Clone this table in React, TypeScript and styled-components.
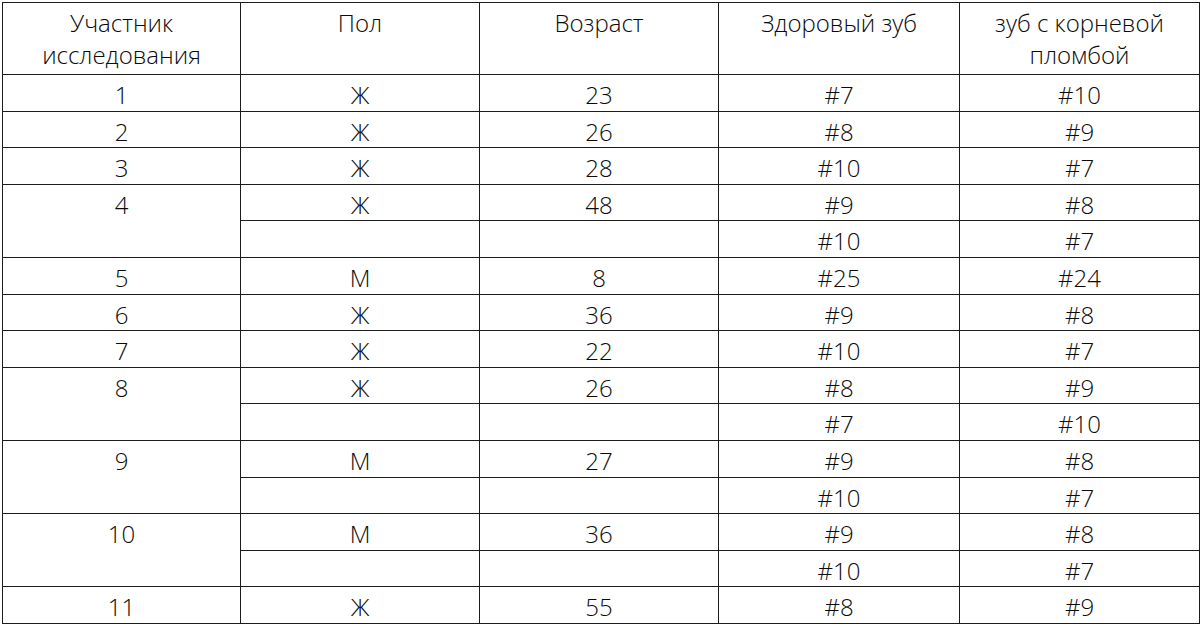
import React from "react";
import styled, { createGlobalStyle } from "styled-components";

const GlobalStyle = createGlobalStyle`
  html, body {
    margin: 0;
    padding: 0;
    background: #ffffff;
    overflow: hidden;
  }
`;

const Page = styled.div`
  padding: 2px 0 0 2px;
  width: 1200px;
  height: 625px;
  box-sizing: border-box;
`;

const Table = styled.table`
  border-collapse: collapse;
  table-layout: fixed;
  width: 1197px;
  font-family: "Open Sans", "Liberation Sans", sans-serif;
  font-weight: 300;
  font-size: 24px;
  color: #0a0a0a;
`;

const HeadRow = styled.tr`
  height: 72px;
`;

const Row = styled.tr`
  height: 36.6px;
`;

const HeadCell = styled.th`
  border: 1px solid #1c1c1c;
  font-weight: 300;
  line-height: 32px;
  text-align: center;
  vertical-align: top;
  padding: 4px 4px 0;
`;

const Cell = styled.td`
  border: 1px solid #1c1c1c;
  line-height: 30px;
  text-align: center;
  vertical-align: top;
  padding: 5px 4px 0;
  white-space: nowrap;
`;

type Entry = {
  id: string;
  sex: string;
  age: string;
  teeth: [string, string][];
};

const columns = [
  { title: "Участник исследования", width: 238 },
  { title: "Пол", width: 239 },
  { title: "Возраст", width: 239 },
  { title: "Здоровый зуб", width: 241 },
  { title: "зуб с корневой пломбой", width: 240 },
];

const entries: Entry[] = [
  { id: "1", sex: "Ж", age: "23", teeth: [["#7", "#10"]] },
  { id: "2", sex: "Ж", age: "26", teeth: [["#8", "#9"]] },
  { id: "3", sex: "Ж", age: "28", teeth: [["#10", "#7"]] },
  { id: "4", sex: "Ж", age: "48", teeth: [["#9", "#8"], ["#10", "#7"]] },
  { id: "5", sex: "М", age: "8", teeth: [["#25", "#24"]] },
  { id: "6", sex: "Ж", age: "36", teeth: [["#9", "#8"]] },
  { id: "7", sex: "Ж", age: "22", teeth: [["#10", "#7"]] },
  { id: "8", sex: "Ж", age: "26", teeth: [["#8", "#9"], ["#7", "#10"]] },
  { id: "9", sex: "М", age: "27", teeth: [["#9", "#8"], ["#10", "#7"]] },
  { id: "10", sex: "М", age: "36", teeth: [["#9", "#8"], ["#10", "#7"]] },
  { id: "11", sex: "Ж", age: "55", teeth: [["#8", "#9"]] },
];

export default function App() {
  return (
    <>
      <GlobalStyle />
      <Page>
        <Table>
          <colgroup>
            {columns.map((c) => (
              <col key={c.title} style={{ width: c.width }} />
            ))}
          </colgroup>
          <thead>
            <HeadRow>
              {columns.map((c) => (
                <HeadCell key={c.title}>{c.title}</HeadCell>
              ))}
            </HeadRow>
          </thead>
          <tbody>
            {entries.map((e) =>
              e.teeth.map((t, i) => (
                <Row key={`row_${e.id}_${i}`}>
                  {i === 0 && <Cell rowSpan={e.teeth.length}>{e.id}</Cell>}
                  <Cell>{i === 0 ? e.sex : ""}</Cell>
                  <Cell>{i === 0 ? e.age : ""}</Cell>
                  <Cell>{t[0]}</Cell>
                  <Cell>{t[1]}</Cell>
                </Row>
              ))
            )}
          </tbody>
        </Table>
      </Page>
    </>
  );
}
